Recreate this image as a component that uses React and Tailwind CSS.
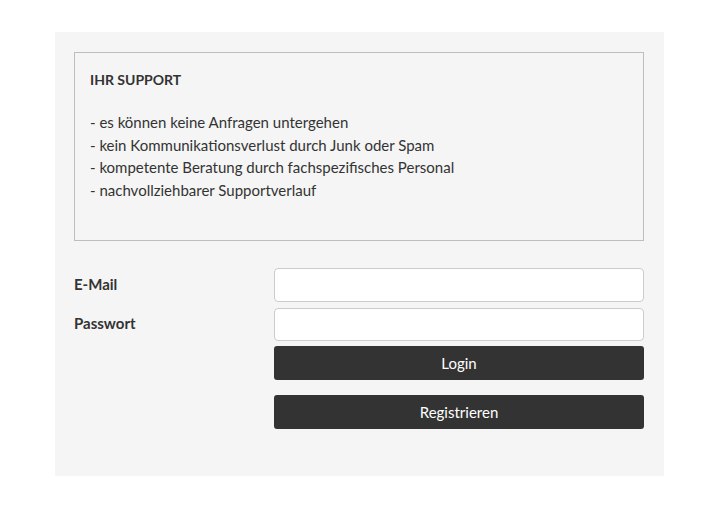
export default function App() {
  return (
    <div className="min-h-[507px] bg-white pt-8 pl-[55px]" style={{ fontFamily: "Lato, 'Open Sans', sans-serif" }}>
      <div className="w-[609px] h-[444px] bg-[#f5f5f5] pt-5 pl-[19px] text-[#333]">
        <div className="w-[570px] border border-[#bdbdbd] h-[189px] px-[15px] pt-[17px]">
          <div className="font-bold text-[14px] leading-[20px]">IHR SUPPORT</div>
          <div className="mt-[21px] text-[15px] leading-[22.5px]">
            <div>- es können keine Anfragen untergehen</div>
            <div>- kein Kommunikationsverlust durch Junk oder Spam</div>
            <div>- kompetente Beratung durch fachspezifisches Personal</div>
            <div>- nachvollziehbarer Supportverlauf</div>
          </div>
        </div>
        <div className="mt-[27px] flex w-[570px]">
          <div className="w-[200px] text-[15px] font-bold">
            <div className="h-[34px] flex items-center -mt-[1px]">E-Mail</div>
            <div className="h-[34px] flex items-center mt-[5px]">Passwort</div>
          </div>
          <div className="flex-1 flex flex-col">
            <input className="h-[34px] bg-white border border-[#cccccc] rounded-[4px] outline-none" />
            <input type="password" className="h-[33px] mt-[6px] bg-white border border-[#cccccc] rounded-[4px] outline-none" />
            <button className="h-[34px] mt-[5px] bg-[#333333] text-white rounded-[3px] text-[15px]">Login</button>
            <button className="h-[34px] mt-[15px] bg-[#333333] text-white rounded-[3px] text-[15px]">Registrieren</button>
          </div>
        </div>
      </div>
    </div>
  );
}
